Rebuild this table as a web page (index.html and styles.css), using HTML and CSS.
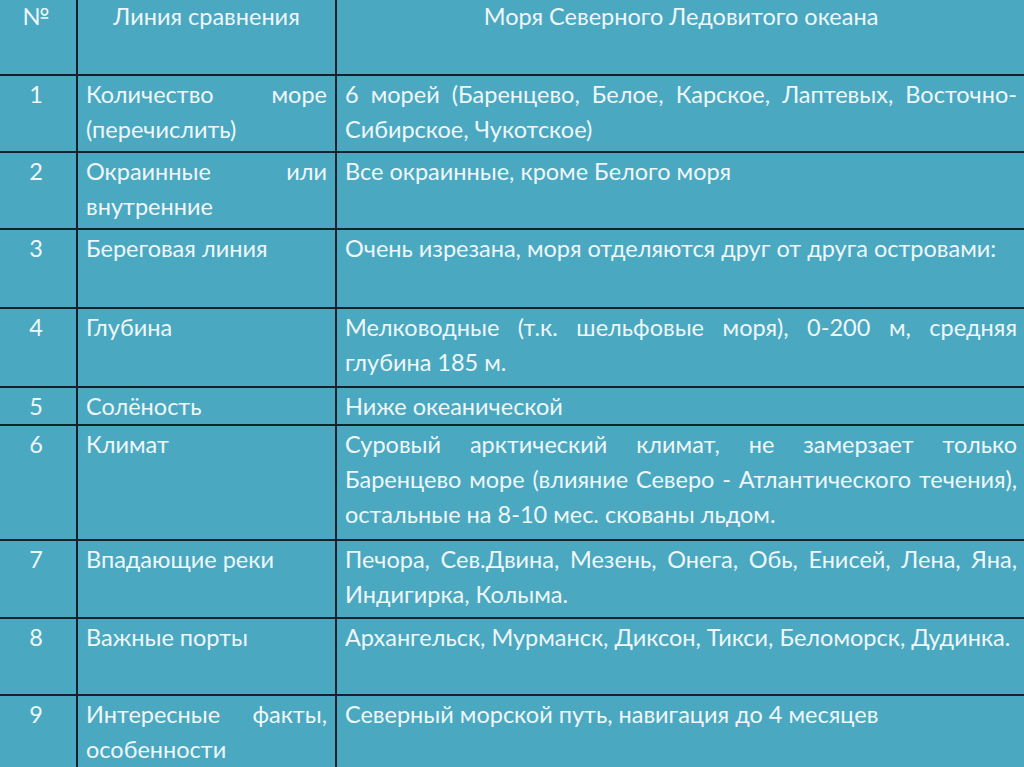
FILE: index.html
```html
<!DOCTYPE html>
<html lang="ru">
<head>
<meta charset="utf-8">
<title>Моря Северного Ледовитого океана</title>
<link rel="stylesheet" href="styles.css">
</head>
<body>
<table class="grid">
  <colgroup>
    <col class="c-num">
    <col class="c-line">
    <col class="c-desc">
  </colgroup>
  <thead>
    <tr class="r-head">
      <th class="num">№</th>
      <th class="head">Линия сравнения</th>
      <th class="head">Моря Северного Ледовитого океана</th>
    </tr>
  </thead>
  <tbody>
    <tr class="r-77">
      <td class="num">1</td>
      <td class="txt">Количество море (перечислить)</td>
      <td class="txt">6 морей (Баренцево, Белое, Карское, Лаптевых, Восточно-Сибирское, Чукотское)</td>
    </tr>
    <tr class="r-77">
      <td class="num">2</td>
      <td class="txt">Окраинные или внутренние</td>
      <td class="txt">Все окраинные, кроме Белого моря</td>
    </tr>
    <tr class="r-79">
      <td class="num">3</td>
      <td class="txt">Береговая линия</td>
      <td class="txt">Очень изрезана, моря отделяются друг от друга островами:</td>
    </tr>
    <tr class="r-79">
      <td class="num">4</td>
      <td class="txt">Глубина</td>
      <td class="txt">Мелководные (т.к. шельфовые моря), 0-200 м, средняя глубина 185 м.</td>
    </tr>
    <tr class="r-37">
      <td class="num">5</td>
      <td class="txt">Солёность</td>
      <td class="txt">Ниже океанической</td>
    </tr>
    <tr class="r-115">
      <td class="num">6</td>
      <td class="txt">Климат</td>
      <td class="txt">Суровый арктический климат, не замерзает только Баренцево море (влияние Северо - Атлантического течения), остальные на 8-10 мес. скованы льдом.</td>
    </tr>
    <tr class="r-78">
      <td class="num">7</td>
      <td class="txt">Впадающие реки</td>
      <td class="txt">Печора, Сев.Двина, Мезень, Онега, Обь, Енисей, Лена, Яна, Индигирка, Колыма.</td>
    </tr>
    <tr class="r-77">
      <td class="num">8</td>
      <td class="txt">Важные порты</td>
      <td class="txt">Архангельск, Мурманск, Диксон, Тикси, Беломорск, Дудинка.</td>
    </tr>
    <tr class="r-77">
      <td class="num">9</td>
      <td class="txt">Интересные факты, особенности</td>
      <td class="txt">Северный морской путь, навигация до 4 месяцев</td>
    </tr>
  </tbody>
</table>
</body>
</html>
```

FILE: styles.css
```css
html, body {
  margin: 0;
  padding: 0;
  background: #4aa8c1;
  overflow: hidden;
}

body {
  width: 1024px;
  height: 767px;
  font-family: Lato, "Open Sans", sans-serif;
  color: #eef7f9;
}

.grid {
  border-collapse: collapse;
  table-layout: fixed;
  width: 1030px;
  margin: -1px 0 0 -4px;
  font-size: 23.5px;
  line-height: 35px;
}

.c-num { width: 81px; }
.c-line { width: 259px; }
.c-desc { width: 690px; }

.grid th,
.grid td {
  border: 2px solid #14222b;
  vertical-align: top;
  padding: 0 8px 0 8px;
  font-weight: normal;
}

.grid tr:first-child th { border-top: none; }
.grid tr > :first-child { border-left: none; }

.grid th { padding-top: 0; }
.grid td { padding-top: 1px; }

.num { text-align: center; }
.head { text-align: center; }
.txt { text-align: justify; }

.r-head { height: 76px; }
.r-77 { height: 77px; }
.r-78 { height: 78px; }
.r-79 { height: 79px; }
.r-37 { height: 37px; }
.r-115 { height: 115px; }
```
